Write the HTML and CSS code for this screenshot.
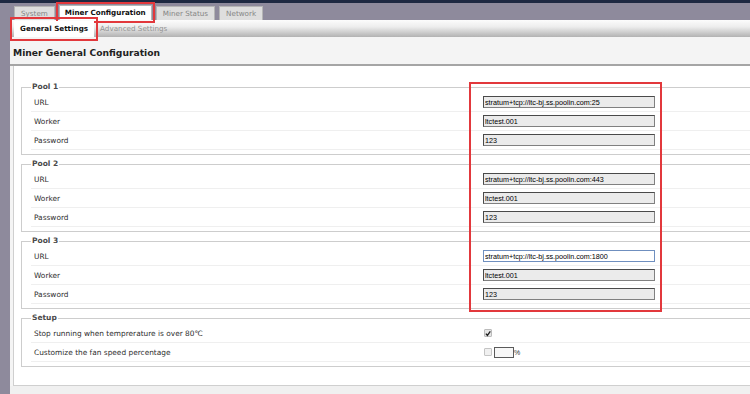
FILE: index.html
```html
<!DOCTYPE html>
<html lang="en">
<head>
    <meta charset="UTF-8">
    <title>Miner Configuration</title>
    <link rel="stylesheet" href="styles.css">
</head>
<body>
    <div class="topbar"></div>

    <div class="tabs">
        <div class="tab">System</div>
        <div class="tab active marked">Miner Configuration</div>
        <div class="tab">Miner Status</div>
        <div class="tab">Network</div>
    </div>

    <div class="main">
        <div class="subtabs">
            <div class="subtab active marked">General Settings</div>
            <div class="subtab">Advanced Settings</div>
        </div>

        <h2 class="page-title">Miner General Configuration</h2>

        <div class="panel">
            <fieldset>
                <legend>Pool 1</legend>
                <div class="row"><label>URL</label><input type="text" value="stratum+tcp://ltc-bj.ss.poolin.com:25"></div>
                <div class="row"><label>Worker</label><input type="text" value="ltctest.001"></div>
                <div class="row"><label>Password</label><input type="text" value="123"></div>
            </fieldset>

            <fieldset>
                <legend>Pool 2</legend>
                <div class="row"><label>URL</label><input type="text" value="stratum+tcp://ltc-bj.ss.poolin.com:443"></div>
                <div class="row"><label>Worker</label><input type="text" value="ltctest.001"></div>
                <div class="row"><label>Password</label><input type="text" value="123"></div>
            </fieldset>

            <fieldset>
                <legend>Pool 3</legend>
                <div class="row"><label>URL</label><input type="text" class="focused" value="stratum+tcp://ltc-bj.ss.poolin.com:1800"></div>
                <div class="row"><label>Worker</label><input type="text" value="ltctest.001"></div>
                <div class="row"><label>Password</label><input type="text" value="123"></div>
            </fieldset>

            <fieldset>
                <legend>Setup</legend>
                <div class="row">
                    <label>Stop running when temprerature is over 80℃</label>
                    <div class="field">
                        <span class="check checked">
                            <svg width="7" height="7" viewBox="0 0 7 7"><path d="M1 3.6 L2.8 5.6 L6.2 1" fill="none" stroke="#222" stroke-width="1.6"/></svg>
                        </span>
                    </div>
                </div>
                <div class="row">
                    <label>Customize the fan speed percentage</label>
                    <div class="field">
                        <span class="check"></span>
                        <input type="text" class="small" value="">
                        <span class="unit">%</span>
                    </div>
                </div>
            </fieldset>
        </div>
        <div class="footer"></div>
    </div>

    <div class="highlight"></div>
</body>
</html>
```

FILE: styles.css
```css
body {
    margin: 0;
    background-color: #8e8a9c;
    font-family: "DejaVu Sans", Verdana, sans-serif;
    overflow: hidden;
    height: 394px;
    position: relative;
}

.topbar {
    height: 3px;
    background-color: #1e2942;
}

.tabs {
    display: flex;
    align-items: flex-end;
    gap: 4px;
    height: 17px;
    padding-left: 14px;
}

.tab {
    height: 14px;
    line-height: 14px;
    padding: 0 6px;
    font-size: 7.2px;
    color: #858585;
    background-color: #dedede;
    border: 1px solid #b5b5b5;
    border-bottom: none;
    box-sizing: border-box;
}

.tab.active {
    height: 15px;
    color: #111;
    font-weight: bold;
    background-color: #fff;
    padding: 0 5px;
}

.marked {
    outline: 2px solid #e2383c;
    outline-offset: 1px;
}

.main {
    margin-left: 10px;
    background-color: #f4f4f4;
}

.subtabs {
    display: flex;
    align-items: flex-end;
    height: 17px;
    padding-left: 4px;
    background: linear-gradient(#fcfcfc, #ededed 40%, #b2b2b2);
}

.subtab {
    height: 16px;
    line-height: 16px;
    padding: 0 6px;
    font-size: 7.2px;
    color: #939393;
}

.subtab.active {
    background-color: #fff;
    color: #111;
    font-weight: bold;
    outline-offset: 2px;
}

.page-title {
    margin: 0;
    padding: 10px 3px 5px;
    font-size: 9.2px;
    line-height: 12px;
    color: #222;
    border-bottom: 2px solid #a5a5a5;
}

.panel {
    margin-left: 3px;
    padding: 15px 0 15px 7px;
    background-color: #fff;
    border-left: 1px solid #cfcfcf;
    border-bottom: 1px solid #cfcfcf;
}

fieldset {
    margin: 0 0 3px 0;
    padding: 0 0 4px 9px;
    border: 1px solid #cdcdcd;
    border-right: none;
}

legend {
    padding: 0 1px;
    font-size: 7.5px;
    line-height: 12px;
    font-weight: bold;
    color: #4a4a4a;
}

.row {
    display: grid;
    grid-template-columns: 452px 1fr;
    align-items: center;
    height: 19px;
    border-bottom: 1px solid #efefef;
    box-sizing: border-box;
}

.row label {
    padding-left: 3px;
    font-size: 7.4px;
    color: #2e2e2e;
}

.row input {
    width: 172px;
    height: 12px;
    box-sizing: border-box;
    margin: 0;
    padding: 0 1px;
    font-family: "Liberation Sans", Arial, sans-serif;
    font-size: 7.2px;
    color: #000;
    background-color: #ebebeb;
    border: 1px solid #808080;
    border-top-color: #4a4a4a;
    border-left-color: #4a4a4a;
}

.row input.focused {
    background-color: #fff;
    border-color: #6f8fbf;
}

.field {
    display: flex;
    align-items: center;
    padding-left: 1px;
}

.check {
    display: flex;
    align-items: center;
    justify-content: center;
    width: 8px;
    height: 8px;
    box-sizing: border-box;
    border: 1px solid #c4c4c4;
    border-radius: 1px;
    background-color: #f0f0f0;
}

.check.checked {
    border-color: #bbb;
    background-color: #e6e6e6;
}

.row input.small {
    width: 20px;
    height: 11px;
    margin-left: 2px;
    background-color: #f7f7f7;
    border-color: #5a5a5a;
}

.unit {
    font-family: "Liberation Sans", Arial, sans-serif;
    font-size: 7px;
    color: #333;
}

.footer {
    height: 11px;
    background-color: #f0f0f0;
}

.highlight {
    position: absolute;
    left: 469px;
    top: 82px;
    width: 193px;
    height: 230px;
    box-sizing: border-box;
    border: 2px solid #e2383c;
}
```
